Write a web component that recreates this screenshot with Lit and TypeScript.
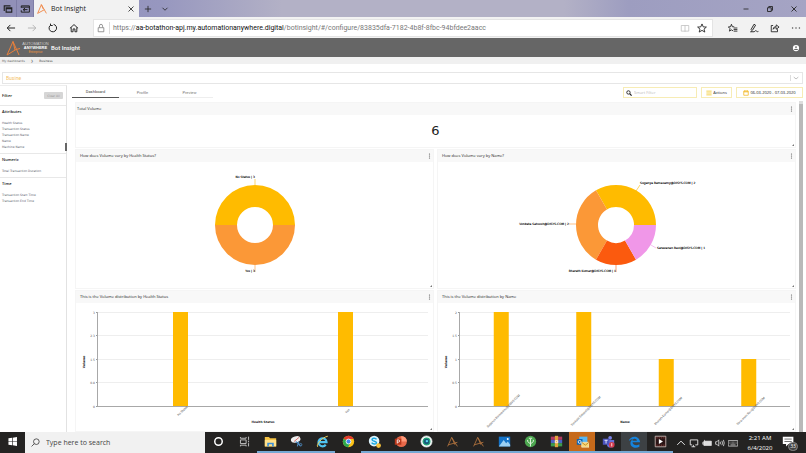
import { LitElement, html, svg, css, SVGTemplateResult } from "lit";
import { customElement, property } from "lit/decorators.js";
import { classMap } from "lit/directives/class-map.js";

type Slice = { label: string; value: number; color: string; x: number; y: number; anchor: string; line: string };
type Bar = { label: string; value: number };

const icon = (body: SVGTemplateResult, box = "0 0 16 16") =>
  html`<svg class="icon" viewBox=${box} fill="none" stroke="currentColor" aria-hidden="true">${body}</svg>`;

@customElement("donut-chart")
export class DonutChart extends LitElement {
  @property({ attribute: false }) slices: Slice[] = [];
  @property({ type: Number }) cx = 180;

  static styles = css`
    :host { display: block; }
    svg { display: block; width: 100%; }
    text { font: 3px "DejaVu Sans", sans-serif; fill: #000; stroke: #000; stroke-width: 0.1; }
  `;

  private arc(from: number, to: number) {
    const R = 40, r = 18, cy = 63;
    const p = (rad: number, a: number) => `${this.cx + rad * Math.cos(a)} ${cy - rad * Math.sin(a)}`;
    const large = to - from > Math.PI + 0.001 ? 1 : 0;
    return `M${p(R, from)}A${R} ${R} 0 ${large} 0 ${p(R, to)}L${p(r, to)}A${r} ${r} 0 ${large} 1 ${p(r, from)}Z`;
  }

  render() {
    const total = this.slices.reduce((s, d) => s + d.value, 0);
    let angle = 0;
    return html`<svg viewBox="1 0 357 126" role="img">
      ${this.slices.map((d) => {
        const start = angle;
        angle += (d.value / total) * Math.PI * 2;
        return svg`<path d=${this.arc(start, angle)} fill=${d.color}></path>
          <path d=${d.line} fill="none" stroke=${d.color} stroke-width="0.6"></path>
          <text x=${d.x} y=${d.y} text-anchor=${d.anchor}>${d.label} | ${d.value}</text>`;
      })}
    </svg>`;
  }
}

@customElement("bar-chart")
export class BarChart extends LitElement {
  @property({ attribute: false }) bars: Bar[] = [];
  @property({ attribute: false }) ticks: string[] = [];
  @property({ type: Number }) max = 1;
  @property() axis = "";

  static styles = css`
    :host { display: block; }
    svg { display: block; width: 100%; }
    text { font: 3px "DejaVu Sans", sans-serif; fill: #555; }
    .slant { font-family: Roboto, sans-serif; }
    .name { font-weight: bold; fill: #222; }
  `;

  render() {
    const left = 23, right = 353, top = 9, base = 103;
    const step = (right - left) / this.bars.length;
    return html`<svg viewBox="1 0 357 128" role="img">
      ${this.ticks.map((t, i) => {
        const y = Math.floor(top + ((base - top) * i) / (this.ticks.length - 1)) + 0.5;
        return svg`<path d="M${left} ${y}H${right}" stroke="#eeeeee"></path>
          <path d="M${left - 2} ${y}H${left}" stroke="#999"></path>
          <text x=${left - 3} y=${y + 1} text-anchor="end">${t}</text>`;
      })}
      <path d="M22.5 9V103.5H353" fill="none" stroke="#a8a8a8"></path>
      ${this.bars.map((b, i) => {
        const mid = left + step * (i + 0.5);
        const h = ((base - top) * b.value) / this.max;
        return svg`<rect x=${mid - 7.5} y=${base - h} width="15" height=${h} fill="#ffbb00"></rect>
          <text class="slant" x=${mid + 2} y="109" text-anchor="middle" transform="rotate(-45 ${mid + 2} 108)">${b.label}</text>`;
      })}
      <text class="name" x="188" y="120" text-anchor="middle">${this.axis}</text>
      <text class="name" x="10" y="59" text-anchor="middle" transform="rotate(-90 10 59)">Volume</text>
    </svg>`;
  }
}

@customElement("chart-panel")
export class ChartPanel extends LitElement {
  @property() heading = "";

  static styles = css`
    :host { display: flex; flex-direction: column; position: relative; border: 1px solid #f5f5f5; box-sizing: border-box; background: #fff; min-width: 0; }
    header { display: flex; align-items: center; justify-content: space-between; height: 12px; padding: 0 1px 0 4px; background: #f8f8f8; }
    .wide-pad { padding-left: 1px; }
    h2 { margin: 0; font: 4px/12px "Open Sans", "Noto Sans", sans-serif; color: #222; }
    button { border: 0; padding: 0; width: 5px; height: 10px; background: none; color: #555; display: flex; }
    svg { width: 5px; height: 10px; }
    .grip { position: absolute; right: 0; bottom: 0; width: 4px; height: 4px; color: #777; }
  `;

  render() {
    return html`<header class=${classMap({ "wide-pad": this.classList.contains("wide") })}>
        <h2>${this.heading}</h2>
        <button aria-label="Panel menu"><svg viewBox="0 0 5 10" fill="currentColor"><circle cx="2.5" cy="3" r=".6"/><circle cx="2.5" cy="5" r=".6"/><circle cx="2.5" cy="7" r=".6"/></svg></button>
      </header>
      <slot></slot>
      <svg class="grip" viewBox="0 0 4 4"><path d="M3 1V3H1Z" fill="currentColor"/></svg>`;
  }
}

const aMark = svg`<path d="M2 14 7 3 11 12M3 12 14 9M7 3 14 14" stroke="#b8763f" stroke-width="1"/>`;

const apps: { name: string; run?: boolean; cls?: string; art: SVGTemplateResult }[] = [
  { name: "Cortana", art: svg`<circle cx="8" cy="8" r="4.6" stroke="#fff" stroke-width="1.8"/>` },
  { name: "Task View", art: svg`<path d="M3 2.500V4H10V2.500M3 14V12.500H10V14M3 6H10V10.500H3ZM13 2V6M13 10V14M13 7V9" stroke="#ddd"/>` },
  { name: "File Explorer", run: true, art: svg`<path d="M1 2.500H6L7.500 4H15V14H1Z" fill="#f5c242" stroke="none"/><path d="M1 6H15V14H1Z" fill="#ffe08a" stroke="none"/><path d="M4 14V9.500H12V14H10V11.500H6V14Z" fill="#3c8fd9" stroke="none"/>` },
  { name: "Snipping Tool", run: true, art: svg`<ellipse cx="7" cy="5.500" rx="6" ry="3.800" transform="rotate(-15 7 5.500)" fill="#eee" stroke="none"/><path d="M5 8 11 3" stroke="#d9534f"/><path d="M7 8 13 13M11 8 9 14" stroke="#4e8cc4" stroke-width="1.3"/><circle cx="13" cy="12" r="1.600" stroke="#4e8cc4"/>` },
  { name: "Internet Explorer", run: true, art: svg`<path d="M3.500 8.800H13A5 5 0 1 0 12 12" stroke="#4fc3f0" stroke-width="2.600"/><path d="M2 14.500C0 12 7 3 14.500 1.500" stroke="#f2d35b" stroke-width="1.200"/>` },
  { name: "Chrome", art: svg`<circle cx="8" cy="8" r="7" fill="#fbc116" stroke="none"/><path d="M8 8 2 4.500A7 7 0 0 1 14.500 5H8Z" fill="#e33b2e" stroke="none"/><path d="M2 4.500A7 7 0 0 0 7.500 15L10.500 9.500 8 8Z" fill="#2da94f" stroke="none"/><circle cx="8" cy="8" r="3" fill="#4285f4" stroke="#fff"/>` },
  { name: "Skype", run: true, art: svg`<circle cx="7.500" cy="7.500" r="6.500" fill="#dff4fc" stroke="none"/><path d="M10.500 5.500C9 3 4.500 4 5 6S10.500 7.500 10.500 9.500 6 12 4.500 9.500" stroke="#1ba8e0" stroke-width="1.800"/><circle cx="13" cy="13" r="2.900" fill="#f8c33b" stroke="none"/>` },
  { name: "PowerPoint", run: true, art: svg`<circle cx="9" cy="8" r="6.800" fill="#e8694a" stroke="none"/><path d="M9 1.200A6.800 6.800 0 0 1 15.800 8H9Z" fill="#ff9a7a" stroke="none"/><path d="M1 4.500H9V12H1Z" fill="#b9371b" stroke="none"/><path d="M4 10.500V6H5.500A1.300 1.300 0 0 1 5.500 8.800H4" stroke="#fff"/>` },
  { name: "Webex", run: true, art: svg`<circle cx="8" cy="8" r="6.800" fill="#fff" stroke="#dfe8e8"/><circle cx="8" cy="8" r="4.200" fill="#165a7a" stroke="#25a979" stroke-width="1.500"/><circle cx="8.500" cy="7.500" r="1.500" fill="#5bd5ee" stroke="none"/>` },
  { name: "Automation Anywhere Client", run: true, art: aMark },
  { name: "Automation Anywhere", run: true, art: aMark },
  { name: "Photos", run: true, art: svg`<path d="M1 2H15V14H1Z" fill="#1473c8" stroke="none"/><path d="M1 14 7 6 10 10 12 8 15 12V14Z" fill="#9bd0f3" stroke="none"/><circle cx="12" cy="5" r="1.200" fill="#fff" stroke="none"/>` },
  { name: "Process Tree", run: true, art: svg`<circle cx="8" cy="8" r="7" fill="#4da650" stroke="none"/><path d="M8 14V5M8 11 4.500 8V6M8 11 11.500 8V6M6 4H10" stroke="#e3f3e1" stroke-width="1.200"/>` },
  { name: "WinRAR", run: true, art: svg`<path d="M1 2H15V6H1Z" fill="#b33a62" stroke="none"/><path d="M1 6H15V10H1Z" fill="#4b62c4" stroke="none"/><path d="M1 10H15V14H1Z" fill="#3b9a4c" stroke="none"/><path d="M6 1H10V15H6Z" fill="#e2a33b" stroke="none"/><path d="M6.500 7H9.500V9.500H6.500Z" stroke="#fff"/>` },
  { name: "Outlook", run: true, cls: "alert", art: svg`<path d="M4 2H14V9H4Z" fill="#57b6f2" stroke="none"/><path d="M1 5H8V12H1Z" fill="#0b64b5" stroke="none"/><circle cx="4.500" cy="8.500" r="1.800" stroke="#fff"/><path d="M7 9H16V15H7Z" fill="#f7d674" stroke="#f6f0d8" stroke-width=".8"/><path d="M7 9 11.500 12.500 16 9" stroke="#b98222"/>` },
  { name: "Teams", run: true, art: svg`<circle cx="10" cy="3.500" r="2.300" fill="#7b83eb" stroke="none"/><path d="M6 6H15V11A4 4 0 0 1 6 11Z" fill="#6a70d8" stroke="none"/><path d="M1 4.500H9V12H1Z" fill="#4b53bc" stroke="none"/><path d="M3 6.500H7M5 6.500V10.500" stroke="#fff"/><circle cx="12" cy="12" r="3.500" fill="#d23a4c" stroke="none"/><path d="M12 10V14" stroke="#fff"/>` },
  { name: "Microsoft Edge", run: true, cls: "active", art: svg`<path d="M1 7.500C2 1 13.500-1 15 9H5.500C6 13 11 13.500 14 11.500V14.500C9 17 2.500 15 3 9.500 3.300 7.500 4.500 6 6.500 5 4.500 5.200 2.500 6 1 7.500ZM5.600 7H11C10.800 3.800 6 3.600 5.600 7Z" fill="#1683dc" fill-rule="evenodd" stroke="none"/>` },
  { name: "Movie Recorder", run: true, art: svg`<path d="M1.500 1.500H14.500V14.500H1.500Z" fill="#2a1414" stroke="#d9c5c0"/><path d="M2 3.500H14M2 12.500H14" stroke="#a54e47" stroke-dasharray="1.200 1"/><path d="M6 5V11L11 8Z" fill="#fff" stroke="none"/>` },
];

@customElement("app-root")
export class AppRoot extends LitElement {
  static styles = css`
    :host { display: flex; flex-direction: column; height: 100vh; overflow: hidden; background: #fff; color: #333; font: 4px/6px Roboto, "Liberation Sans", sans-serif; }
    * { box-sizing: border-box; }
    button, input, select { font: inherit; color: inherit; border: 0; padding: 0; margin: 0; background: none; }
    a { color: inherit; text-decoration: none; }
    .icon { display: block; width: 10px; height: 10px; flex: none; }
    .titlebar { display: flex; align-items: stretch; height: 17px; flex: none; background: linear-gradient(90deg, #8c8cba 0, #9797bf 20%, #b3b1c6 35%, #b3b1c6 70%, #9d9dc0 78%, #a5a4c4 100%); color: #222; }
    .titlebar > button { width: 17px; display: grid; place-items: center; }
    .titlebar > .side { background: #9190b8; border-right: 1px solid #7e7da6; }
    .tab { display: flex; align-items: center; gap: 4px; width: 105px; padding: 0 3px; background: #f2f2f2; font: 7px/16px "Open Sans", "Noto Sans", sans-serif; color: #222; }
    .tab span { flex: 1; }
    .grow { flex: 1; min-width: 0; }
    .titlebar > .win { width: 24px; }
    .nav { display: flex; align-items: center; height: 21px; flex: none; background: #f2f2f2; color: #222; }
    .nav > button { width: 21px; display: grid; place-items: center; }
    .nav > button:disabled { color: #aaa; }
    .address { display: flex; flex: 1; align-items: center; gap: 3px; height: 18px; margin: 0 9px; padding: 0 5px 0 2px; background: #fff; color: #222; font: 7px/16px Roboto, sans-serif; border: 1px solid #e4e4e4; }
    .url { flex: 1; color: #777; }
    .url b { font-weight: 400; color: #111; }
    .address .rule { width: 1px; height: 12px; background: #ddd; }
    .faded { color: #bbb; display: flex; padding-right: 4px; }
    .address button { display: flex; }
    .brand { display: flex; align-items: center; height: 19px; flex: none; padding: 0 5px 0 6px; background: #666; color: #fff; }
    .brand .mark { width: 14px; height: 16px; }
    .logo { width: 31px; font: 4px/4px "Liberation Sans", sans-serif; color: #ccc; text-align: center; }
    .logo b { display: block; color: #fff; }
    .logo i { display: block; font-size: 3px; font-style: normal; color: #f5993a; }
    .brand h1 { margin: 0; flex: 1; font: 500 6px/16px Roboto, sans-serif; }
    .crumbs { display: flex; align-items: center; gap: 6px; height: 7px; flex: none; padding: 0 2px; background: #f0f0f0; font: 3px/6px "DejaVu Sans", sans-serif; color: #666; }
    .crumbs b { color: #444; font-weight: 400; }
    .picker { display: flex; align-items: center; margin: 8px 3px 0 2px; height: 12px; flex: none; border: 1px solid #e6e6e6; }
    .picker select { flex: 1; appearance: none; height: 10px; padding: 0 3px; font: 5px/10px Roboto, sans-serif; color: #f5c266; }
    .picker .icon { width: 12px; height: 6px; color: #bbb; border-left: 1px solid #ddd; }
    .body { display: flex; flex: 1; min-height: 0; margin-top: 1px; }
    aside { width: 67px; flex: none; border-top: 1px solid #eee; border-right: 1px solid #e2e2e2; position: relative; color: #5d6570; }
    aside h2 { margin: 0; font: 600 4px/8px "Open Sans", "Noto Sans", sans-serif; color: #111; }
    .filter { display: flex; align-items: center; justify-content: space-between; height: 20px; padding: 0 3px 0 2px; border-bottom: 1px solid #e8e8e8; }
    .filter button { width: 19px; height: 7px; border-radius: 1px; background: #d6d6d6; color: #999; font: 3px/6px "DejaVu Sans", sans-serif; }
    .group { padding: 2px 2px 3px; border-bottom: 1px solid #e8e8e8; }
    .group:last-of-type { border: 0; }
    .group ul { margin: 4px 0 0; padding: 0; list-style: none; font: 3px/6px "DejaVu Sans", sans-serif; }
    .handle { position: absolute; right: -1px; top: 57px; width: 2px; height: 8px; background: #666; }
    main { flex: 1; min-width: 0; display: flex; flex-direction: column; padding-left: 5px; }
    .tools { display: flex; align-items: flex-start; gap: 4px; height: 16px; flex: none; padding: 2px 3px 0 0; }
    .tabs { display: flex; height: 11px; border-bottom: 1px solid #eee; margin-right: auto; }
    .tabs button { width: 47px; height: 11px; color: #777; }
    .tabs .on { border-bottom: 1px solid #555; color: #444; }
    .box { display: flex; align-items: center; justify-content: center; gap: 1px; height: 11px; padding: 0 2px; border: 1px solid #f7ecb5; font: 4px/9px "Open Sans", "Noto Sans", sans-serif; color: #222; white-space: nowrap; }
    .box .icon { width: 6px; height: 6px; }
    .box.search { width: 74px; gap: 2px; }
    .box input { flex: 1; min-width: 0; height: 9px; outline: 0; }
    .box input::placeholder { color: #bbb; opacity: 1; }
    .box.act { width: 31px; }
    .box.date { width: 67px; }
    .scroll { display: flex; flex: 1; min-height: 0; gap: 2px; padding-right: 3px; overflow: hidden; }
    .grid { flex: 1; min-width: 0; display: grid; grid-template-columns: 1fr 1fr; align-content: start; gap: 1px 3px; padding: 1px 1px 0 3px; }
    .wide { grid-column: 1 / -1; }
    .total { font: 13px/32px "DejaVu Sans", sans-serif; text-align: center; color: #222; }
    .bar { width: 4px; background: #b9b9b9; border-top: 3px solid #ddd; }
    .taskbar { display: flex; align-items: stretch; height: 21px; flex: none; background: #242322; color: #eee; }
    .taskbar button { display: grid; place-items: center; width: 26px; border-bottom: 2px solid transparent; }
    .taskbar .icon { width: 13px; height: 13px; }
    .taskbar .run { border-bottom-color: #76a9d4; }
    .taskbar .alert { background: #c66a1b; }
    .taskbar .active { background: #3d4144; }
    .taskbar .start { width: 25px; }
    .find { display: flex; align-items: center; gap: 6px; width: 180px; padding: 0 6px; background: #f1f1f1; color: #333; }
    .find .icon { width: 9px; height: 9px; }
    .find input { flex: 1; min-width: 0; font: 7px/16px "Open Sans", "Noto Sans", sans-serif; outline: 0; }
    .find input::placeholder { color: #444; opacity: 1; }
    .tray { display: flex; align-items: center; gap: 3px; margin-left: auto; }
    .taskbar .tray > .icon { width: 10px; height: 10px; }
    .clock { width: 38px; text-align: center; font: 6px/10px "Open Sans", "Noto Sans", sans-serif; color: #fff; }
    .taskbar .note { width: 24px; height: 21px; position: relative; justify-items: start; }
    .count { position: absolute; right: 8px; bottom: 0; width: 10px; height: 9px; border-radius: 5px; background: #444; border: 1px solid #888; font: 5px/7px "Open Sans", sans-serif; color: #fff; text-align: center; }
  `;

  private health: Slice[] = [
    { label: "No Status", value: 3, color: "#ffbb00", x: 180, y: 16, anchor: "end", line: "M180 17V23" },
    { label: "Yes", value: 3, color: "#fb9837", x: 180, y: 110, anchor: "end", line: "M180 103V110" },
  ];
  private names: Slice[] = [
    { label: "Suganya Ramasamy@DISYS.COM", value: 2, color: "#ffbb00", x: 203, y: 22, anchor: "start", line: "M199 29 203 23" },
    { label: "Venkata Sateesh@DISYS.COM", value: 2, color: "#fb9837", x: 132, y: 63, anchor: "end", line: "M132 62H139" },
    { label: "Bharath Kumar@DISYS.COM", value: 1, color: "#fb5a0e", x: 179, y: 110, anchor: "end", line: "M179 103V110" },
    { label: "Saravanan Ravi@DISYS.COM", value: 1, color: "#f097e8", x: 220, y: 87, anchor: "start", line: "M214 83 219 86" },
  ];

  private group(title: string, items: string[]) {
    return html`<section class="group"><h2>${title}</h2><ul>${items.map((i) => html`<li><a href="#">${i}</a></li>`)}</ul></section>`;
  }

  render() {
    return html`
      <div class="titlebar">
        <button class="side" aria-label="Tabs set aside">${icon(svg`<path d="M2 11V3H12M5 6H14V13H5ZM5 7.500H14" stroke-width="1.800"/>`)}</button>
        <button class="side" aria-label="Set tabs aside">${icon(svg`<path d="M2 6V3H15V13H2V10M2 5H15" stroke-width="1.600"/><path d="M12 9H5M8 6.500 5 9 8 11.500" stroke-width="1.600"/>`)}</button>
        <div class="tab">
          ${icon(svg`<path d="M1 15 7 1 10 8M1 15 12 9M7 1 15 15" stroke="#f08a4b" stroke-width="1.500"/>`)}
          <span>Bot Insight</span>
          <button aria-label="Close tab">${icon(svg`<path d="M4 4 12 12M12 4 4 12" stroke-width="1.300"/>`)}</button>
        </div>
        <button aria-label="New tab">${icon(svg`<path d="M8 3V13M3 8H13" stroke-width="1.300"/>`)}</button>
        <button aria-label="Tab list">${icon(svg`<path d="M4 6 8 10 12 6" stroke-width="1.300"/>`)}</button>
        <div class="grow"></div>
        <button class="win" aria-label="Minimize">${icon(svg`<path d="M4 8H12" stroke-width="1.300"/>`)}</button>
        <button class="win" aria-label="Restore">${icon(svg`<path d="M4 6H10V12H4ZM6 6V4H12V10H10" stroke-width="1.400"/>`)}</button>
        <button class="win" aria-label="Close">${icon(svg`<path d="M4 4 12 12M12 4 4 12" stroke-width="1.400"/>`)}</button>
      </div>
      <nav class="nav">
        <button aria-label="Back">${icon(svg`<path d="M14.500 8H2M7 3 2 8 7 13" stroke-width="1.600"/>`)}</button>
        <button aria-label="Forward" disabled>${icon(svg`<path d="M1.500 8H14M9 3 14 8 9 13" stroke-width="1.300"/>`)}</button>
        <button aria-label="Refresh">${icon(svg`<path d="M4.500 3A6 6 0 1 0 9 2.200M4 1V4H7.500" stroke-width="1.600"/>`)}</button>
        <button aria-label="Home">${icon(svg`<path d="M1.500 8.500 8 2.500 14.500 8.500M3.500 7V14H6.500V9.500H9.500V14H12.500V7" stroke-width="1.500"/>`)}</button>
        <div class="address">
          ${icon(svg`<path d="M3.500 7.500H12.500V14H3.500ZM5.500 7V5A2.500 3 0 0 1 10.500 5V7" stroke="#777" stroke-width="1.200"/>`)}
          <span class="rule"></span>
          <span class="url">https://<b>aa-botathon-apj.my.automationanywhere.digital</b>/botinsight/#/configure/83835dfa-7182-4b8f-8fbc-94bfdee2aacc</span>
          <span class="faded">${icon(svg`<path d="M8 4V14M8 4H2V13H8M8 4H14V13H8" stroke-width="1.200"/>`)}</span>
          <button aria-label="Add to favorites">${icon(svg`<path d="M8 1.500 10 6.200 15 6.500 11.200 9.800 12.500 14.500 8 11.800 3.500 14.500 4.800 9.800 1 6.500 6 6.200Z" stroke-width="1.400"/>`)}</button>
        </div>
        <button aria-label="Favorites">${icon(svg`<path d="M10 6 7 6 5.500 2 4 6 0.500 6.200 3.200 9 2.300 13 5.500 11 8 12.500M9 8H15M9 10.500H15M9 13H15" stroke-width="1.400"/>`)}</button>
        <button aria-label="Add notes">${icon(svg`<path d="M3 11 8 2 10.500 3.500 6 11 2.500 14H8C10 14 10 11 11.500 12.500S13 14 15 13.500" stroke-width="1.500"/>`)}</button>
        <button aria-label="Share">${icon(svg`<path d="M5 4H2V14H12V10M5 10C5.500 6.500 8 5.500 10 5.500V3L14.500 6.500 10 10V7.500C8 7.500 6 8 5 10Z" stroke-width="1.400"/>`)}</button>
        <button aria-label="More">${icon(svg`<path d="M1.500 8H3.500M7 8H9M12.500 8H14.500" stroke-width="1.800"/>`)}</button>
      </nav>
      <header class="brand">
        <svg class="mark" viewBox="0 0 14 16" fill="none" stroke="#e8803c" aria-hidden="true"><path d="M1 15 7 1.500 13 15M1 15 10 9.500 14 8.500M7 1.500 9 10"/></svg>
        <div class="logo">AUTOMATION<b>ANYWHERE</b><i>Enterprise</i></div>
        <h1>Bot Insight</h1>
        <button aria-label="Account"><svg class="icon" viewBox="0 0 16 16" aria-hidden="true"><circle cx="8" cy="8" r="5" fill="#fff"/><circle cx="8" cy="6.500" r="1.500" fill="#666"/><path d="M5 10Q8 8 11 10V11H5Z" fill="#666"/></svg></button>
      </header>
      <div class="crumbs"><a href="#">My dashboards</a><span>❯</span><b>Business</b></div>
      <div class="picker">
        <select aria-label="Dashboard name"><option>Busine</option></select>
        <svg class="icon" viewBox="0 0 12 6" fill="none" stroke="currentColor" aria-hidden="true"><path d="M3 2 5.500 4 8 2"/></svg>
      </div>
      <div class="body">
        <aside>
          <div class="filter"><h2>Filter</h2><button>Clear All</button></div>
          ${this.group("Attributes", ["Health Status", "Transaction Status", "Transaction Name", "Name", "Machine Name"])}
          ${this.group("Numeric", ["Total Transaction Duration"])}
          ${this.group("Time", ["Transaction Start Time", "Transaction End Time"])}
          <span class="handle"></span>
        </aside>
        <main>
          <div class="tools">
            <div class="tabs"><button class="on">Dashboard</button><button>Profile</button><button>Preview</button></div>
            <label class="box search">${icon(svg`<circle cx="6.500" cy="6.500" r="4.500" stroke-width="2.400"/><path d="M10 10 15 15" stroke-width="3"/>`)}<input placeholder="Smart Filter" aria-label="Smart Filter" /></label>
            <button class="box act">${icon(svg`<path d="M1 3H15M1 8H15M1 13H15" stroke="#f5d24e" stroke-width="2.600"/>`)}Actions</button>
            <button class="box date">${icon(svg`<path d="M2 3H14V14H2Z" stroke="#f2b51c" stroke-width="2"/><path d="M2 5H14M5 0V4M11 0V4" stroke="#f2b51c" stroke-width="2"/>`)}06-03-2020 - 07-03-2020</button>
          </div>
          <div class="scroll">
            <div class="grid">
              <chart-panel class="wide" heading="Total Volume"><div class="total">6</div></chart-panel>
              <chart-panel heading="How does Volume vary by Health Status?"><donut-chart .slices=${this.health}></donut-chart></chart-panel>
              <chart-panel heading="How does Volume vary by Name?"><donut-chart .cx=${179} .slices=${this.names}></donut-chart></chart-panel>
              <chart-panel heading="This is the Volume distribution by Health Status">
                <bar-chart axis="Health Status" .max=${3} .ticks=${["3", "2.3", "1.5", "0.8", "0"]}
                  .bars=${[{ label: "No Status", value: 3 }, { label: "Yes", value: 3 }]}></bar-chart>
              </chart-panel>
              <chart-panel heading="This is the Volume distribution by Name">
                <bar-chart axis="Name" .max=${2} .ticks=${["2", "1.5", "1", "0.5", "0"]}
                  .bars=${this.names.map((n) => ({ label: n.label, value: n.value }))}></bar-chart>
              </chart-panel>
            </div>
            <div class="bar"></div>
          </div>
        </main>
      </div>
      <footer class="taskbar">
        <button class="start" aria-label="Start">${icon(svg`<path d="M3 4 7.500 3.400V7.600H3ZM8.300 3.300 13.500 2.500V7.600H8.300ZM3 8.400H7.500V12.600L3 12ZM8.300 8.400H13.500V13.500L8.300 12.700Z" fill="#fff" stroke="none"/>`)}</button>
        <label class="find">${icon(svg`<circle cx="9.500" cy="6.500" r="5" stroke-width="1.400"/><path d="M6 10 1 15" stroke-width="1.400"/>`)}<input placeholder="Type here to search" aria-label="Search" /></label>
        ${apps.map((a) => html`<button class=${classMap({ run: !!a.run, alert: a.cls === "alert", active: a.cls === "active" })} aria-label=${a.name}>${icon(a.art)}</button>`)}
        <div class="tray">
          ${icon(svg`<path d="M2 11 8 5 14 11" stroke-width="1.500"/>`)}
          ${icon(svg`<path d="M5 11H2V3H14V11H10M4 14H10M7 11V14" stroke-width="1.400"/>`)}
          ${icon(svg`<path d="M3 5H15V12H3Z" fill="#ddd"/><path d="M1 7H3V10H1ZM4 3V5"/>`)}
          ${icon(svg`<path d="M1 6H3L6 3V13L3 10H1ZM8.500 6V10M11 4.500Q13 8 11 11.500M13.500 3Q16 8 13.500 13" stroke-width="1.200"/>`)}
          ${icon(svg`<path d="M.500 4H15.500V13H.500Z"/><path d="M2.500 6.500H14M2.500 8.500H14" stroke-dasharray="1 1"/><path d="M4 11H12"/>`)}
          <div class="clock">2:21 AM<br />6/4/2020</div>
          <button class="note" aria-label="Notifications, 33 new">${icon(svg`<path d="M1 2H14V11H8L5 14V11H1Z" fill="#fff" stroke="none"/><path d="M3 5H12M3 8H12" stroke="#555"/>`)}<span class="count">33</span></button>
        </div>
      </footer>
    `;
  }
}
